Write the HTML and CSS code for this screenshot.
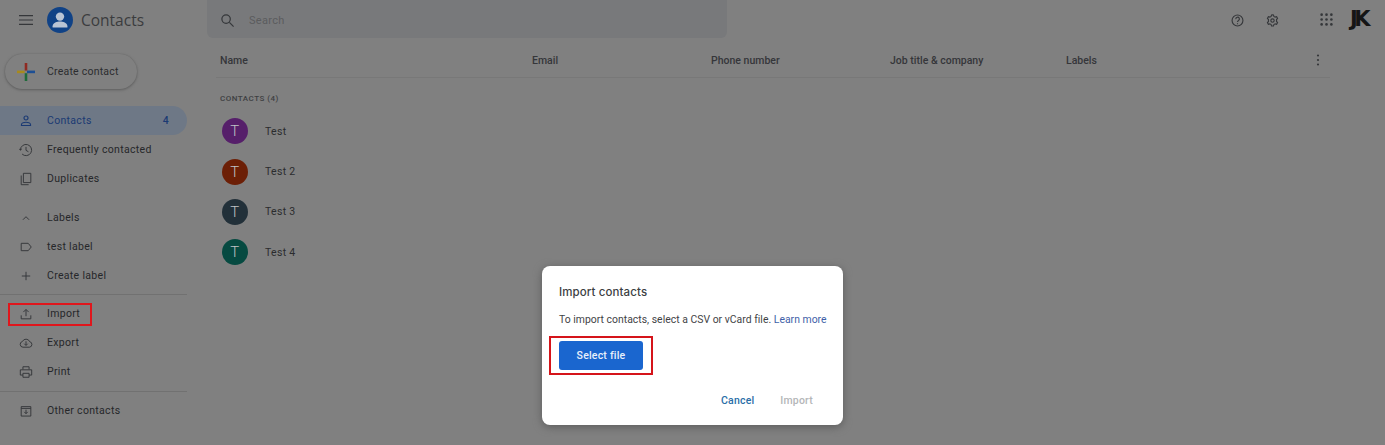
FILE: index.html
```html
<!DOCTYPE html>
<html lang="en">
<head>
<meta charset="utf-8">
<title>Contacts</title>
<link rel="stylesheet" href="styles.css">
</head>
<body>
<div class="app">
  <aside class="sidebar">
    <div class="brand">
      <svg class="menu-icon" viewBox="0 0 14 10"><path d="M0 .6h14M0 5h14M0 9.400h14"/></svg>
      <span class="logo"><svg viewBox="0 0 26 26"><circle cx="13" cy="9.600" r="4.200"/><path d="M5.600 19.200c0-3.400 4.600-4.600 7.400-4.600s7.400 1.200 7.400 4.600v1.300H5.600z"/></svg></span>
      <span class="brand-name">Contacts</span>
    </div>
    <button class="create">
      <svg viewBox="0 0 18 18"><path class="p-blue" d="M10 7.600h8v2.600h-8z"/><path class="p-red" d="M7.700 0h2.600v7.600H7.700z"/><path class="p-yellow" d="M0 7.600h7.700v2.600H0z"/><path class="p-green" d="M7.700 10.200h2.600V18H7.700z"/></svg>
      Create contact
    </button>
    <nav class="nav">
      <a class="item active">
        <svg viewBox="0 0 16 16"><circle cx="8" cy="4.600" r="2.300"/><path d="M2.800 13.200v-1c0-1.900 3.400-2.800 5.200-2.800s5.200.9 5.200 2.800v1z"/></svg>
        <span>Contacts</span><b class="count">4</b>
      </a>
      <a class="item">
        <svg viewBox="0 0 16 16"><path d="M1.600 8a6.400 6.400 0 1 1 1.900 4.600M.3 6.600 1.600 8.300 3.200 6.800M8 4.400v4l2.800 1.600"/></svg>
        <span>Frequently contacted</span>
      </a>
      <a class="item">
        <svg viewBox="0 0 16 16"><path d="M5 1.500h8.500v10.600H5zM2.500 4v10.500h8.500"/></svg>
        <span>Duplicates</span>
      </a>
    </nav>
    <nav class="nav labels">
      <a class="item">
        <svg viewBox="0 0 16 16"><path d="M4.500 10 8 6.500 11.500 10"/></svg>
        <span>Labels</span>
      </a>
      <a class="item">
        <svg viewBox="0 0 16 16"><path d="M2.500 3.800h8l3.500 4.200-3.500 4.200h-8z"/></svg>
        <span>test label</span>
      </a>
      <a class="item">
        <svg viewBox="0 0 16 16"><path d="M8 3.200v9.600M3.200 8h9.600"/></svg>
        <span>Create label</span>
      </a>
    </nav>
    <hr class="rule">
    <nav class="nav">
      <a class="item flagged">
        <svg viewBox="0 0 16 16"><path d="M2.500 9.500v4h11v-4M8 10.500V3M5 5.800 8 2.800l3 3"/></svg>
        <span>Import</span>
      </a>
      <a class="item">
        <svg viewBox="0 0 16 16"><path d="M4.500 12.800a3.300 3.300 0 0 1-.6-6.500A4.500 4.500 0 0 1 12.200 6.500a3.200 3.200 0 0 1-.2 6.300zM8 6v4.500M6 8.800l2 2 2-2"/></svg>
        <span>Export</span>
      </a>
      <a class="item">
        <svg viewBox="0 0 16 16"><path d="M4.500 5V2h7v3M4.500 11.500h-3V5.500h13v6h-3M4.500 9.500h7V14h-7z"/></svg>
        <span>Print</span>
      </a>
    </nav>
    <hr class="rule rule-last">
    <nav class="nav">
      <a class="item">
        <svg viewBox="0 0 16 16"><path d="M2.500 3h11v10.800h-11zM2.500 5h11M8 6.500v4.500M6 9l2 2 2-2"/></svg>
        <span>Other contacts</span>
      </a>
    </nav>
  </aside>
  <div class="main">
    <header class="topbar">
      <div class="search">
        <svg viewBox="0 0 16 16"><circle cx="6.500" cy="6.500" r="4.500"/><path d="m10 10 4.500 4.500"/></svg>
        <span>Search</span>
      </div>
      <div class="actions">
        <svg class="act" viewBox="0 0 16 16"><circle cx="8" cy="8" r="5.800"/><path d="M6.200 6.500a1.900 1.900 0 1 1 2.900 1.500C8.300 8.500 8 9 8 9.700M8 10.800v1.100"/></svg>
        <svg class="act" viewBox="0 0 16 16"><path d="m8 2 1 .1.500 1.600 1.300.7 1.600-.4 1 1.700L12.300 7v2l1.100 1.300-1 1.700-1.600-.4-1.300.7L9 13.900H7l-.500-1.600-1.300-.7-1.600.4-1-1.700L3.700 9V7L2.600 5.700l1-1.700 1.600.4 1.300-.7L7 2.100z"/><circle cx="8" cy="8" r="1.800"/></svg>
        <svg class="apps" viewBox="0 0 12 12"><circle cx="1.500" cy="1.500" r="1.200"/><circle cx="6" cy="1.500" r="1.200"/><circle cx="10.500" cy="1.500" r="1.200"/><circle cx="1.500" cy="6" r="1.200"/><circle cx="6" cy="6" r="1.200"/><circle cx="10.500" cy="6" r="1.200"/><circle cx="1.500" cy="10.500" r="1.200"/><circle cx="6" cy="10.500" r="1.200"/><circle cx="10.500" cy="10.500" r="1.200"/></svg>
        <span class="jk">JK</span>
      </div>
    </header>
    <section class="list">
      <div class="head">
        <span>Name</span><span>Email</span><span>Phone number</span><span>Job title &amp; company</span><span>Labels</span>
        <svg class="more" viewBox="0 0 4 12"><circle cx="2" cy="1.500" r="1.100"/><circle cx="2" cy="6" r="1.100"/><circle cx="2" cy="10.500" r="1.100"/></svg>
      </div>
      <h2 class="group">CONTACTS (4)</h2>
      <ul class="people">
        <li><i class="avatar purple">T</i>Test</li>
        <li><i class="avatar rust">T</i>Test 2</li>
        <li><i class="avatar slate">T</i>Test 3</li>
        <li><i class="avatar teal">T</i>Test 4</li>
      </ul>
    </section>
  </div>
  <div class="dialog" role="dialog">
    <h1>Import contacts</h1>
    <p>To import contacts, select a CSV or vCard file. <a>Learn more</a></p>
    <div class="select-wrap"><button class="select">Select file</button></div>
    <div class="dialog-actions"><button class="cancel">Cancel</button><button class="disabled">Import</button></div>
  </div>
</div>
</body>
</html>
```
FILE: styles.css
```css
*, *::before, *::after { box-sizing: border-box; }
html, body { margin: 0; height: 100%; }
body { background: #808080; color: #2a2b2d; font-family: Roboto, "Liberation Sans", sans-serif; overflow: hidden; }
svg { display: block; fill: none; stroke: #35373a; stroke-width: 1.200; }
.app { display: flex; height: 445px; position: relative; }

.sidebar { width: 207px; flex: none; }
.brand { display: flex; align-items: center; height: 40px; padding-left: 19px; }
.menu-icon { width: 14px; height: 10px; }
.logo { width: 26px; height: 26px; margin-left: 14px; border-radius: 50%; background: #104286; }
.logo svg { width: 26px; height: 26px; fill: #b9c4d4; stroke: none; }
.brand-name { margin-left: 8px; font: 400 15.500px "Open Sans", sans-serif; color: #3b3c3e; }
.create { display: flex; align-items: center; gap: 12px; width: 132px; height: 35px; margin: 14px 0 17px 5px; padding: 0 0 0 12px; border: 0; border-radius: 18px; background: #808080; box-shadow: 0 1px 3px #5e5e5e, 0 0 1px #666; color: #2c2d2f; font: 400 10.500px Roboto, sans-serif; letter-spacing: .22px; }
.create svg { width: 18px; height: 18px; stroke: none; flex: none; }
.p-blue { fill: #1d4f94; }
.p-red { fill: #8f2a22; }
.p-yellow { fill: #a88a1c; }
.p-green { fill: #1f6b3a; }

.nav { display: flex; flex-direction: column; }
.labels { margin-top: 10px; }
.item { display: flex; align-items: center; height: 29px; width: 187px; padding: 0 18px 0 19px; border-radius: 0 15px 15px 0; font-weight: 400; font-size: 10.500px; letter-spacing: .32px; color: #26272a; position: relative; }
.item svg { width: 14px; height: 14px; flex: none; margin-right: 14px; stroke-width: 1.100; }
.active { background: #6e7886; color: #1b3a73; }
.active svg { stroke: #1b3a73; stroke-width: 1.300; }
.count { margin-left: auto; font-weight: 500; }
.rule { width: 187px; height: 1px; margin: 4px 0; border: 0; background: #717171; }
.rule-last { margin: 5px 0 4px; }
.flagged::after { content: ""; position: absolute; left: 8px; top: 4px; width: 84px; height: 23px; border: 2px solid #e0161c; }

.main { flex: 1; min-width: 0; }
.topbar { display: flex; height: 46px; padding-bottom: 8px; }
.search { display: flex; align-items: center; width: 520px; border-radius: 0 0 6px 6px; background: #78797b; padding: 2px 0 0 13px; color: #5b5c5e; font-size: 11px; letter-spacing: .3px; }
.search svg { width: 15px; height: 15px; margin-right: 14px; stroke-width: 1.300; }
.actions { display: flex; align-items: center; margin-left: auto; padding-top: 3px; }
.act { width: 15px; height: 15px; margin-right: 20px; }
.apps { width: 13px; height: 13px; margin: -2px 16px 0 20px; fill: #35373a; stroke: none; }
.jk { width: 36px; padding-left: 1px; margin-top: -4px; font: 700 21px "DejaVu Sans", sans-serif; letter-spacing: -3.500px; color: #151515; }

.list { padding: 0 55px 0 9px; }
.head { display: grid; grid-template-columns: 312px 179px 179px 176px 1fr auto; align-items: center; height: 32px; padding: 0 10px 2px 4px; border-bottom: 1px solid #787878; font-weight: 500; font-size: 10.500px; color: #35363a; }
.more { width: 4px; height: 12px; fill: #35373a; stroke: none; margin-top: -1px; }
.group { margin: 16px 0 0 4px; font-size: 8px; line-height: 10px; font-weight: 500; letter-spacing: .5px; color: #3e3f42; }
.people { list-style: none; margin: 7px 0 0; padding: 0 0 0 6px; }
.people li { display: flex; align-items: center; height: 40.400px; font-size: 10.500px; letter-spacing: .3px; color: #2b2c2e; }
.avatar { display: flex; align-items: center; justify-content: center; width: 26px; height: 26px; margin-right: 17px; border-radius: 50%; font-style: normal; font-size: 15px; font-weight: 300; color: #bfc3c6; }
.purple { background: #561f6a; }
.rust { background: #6c1f06; }
.slate { background: #223039; }
.teal { background: #064a41; }

.dialog { position: absolute; left: 542px; top: 266px; width: 301px; height: 159px; padding: 18px 17px 0; border-radius: 8px; background: #fff; box-shadow: 0 2px 8px #5c5c5c; color: #3c4043; }
.dialog h1 { margin: 0; font: 500 11.500px/16px Inter, sans-serif; letter-spacing: .1px; color: #3c4043; }
.dialog p { margin: 13px 0 0; font-size: 10.400px; line-height: 14px; white-space: nowrap; letter-spacing: .02px; color: #3f4346; }
.dialog p a { color: #3f5fa8; }
.select-wrap { position: relative; margin-top: 14px; }
.select { display: block; width: 84px; height: 29px; border: 0; border-radius: 3px; background: #1a66cf; color: #e8f0fb; font: 500 10.500px Roboto, sans-serif; letter-spacing: .2px; }
.select-wrap::after { content: ""; position: absolute; left: -10px; top: -5px; width: 104px; height: 39px; border: 2px solid #d5141a; }
.dialog-actions { display: flex; justify-content: flex-end; gap: 26px; margin: 24px 13px 0 0; }
.dialog-actions button { padding: 0; border: 0; background: none; font: 500 10.500px Roboto, sans-serif; letter-spacing: .2px; }
.cancel { color: #2a6fa8; }
.disabled { color: #b4b6b8; }
```
